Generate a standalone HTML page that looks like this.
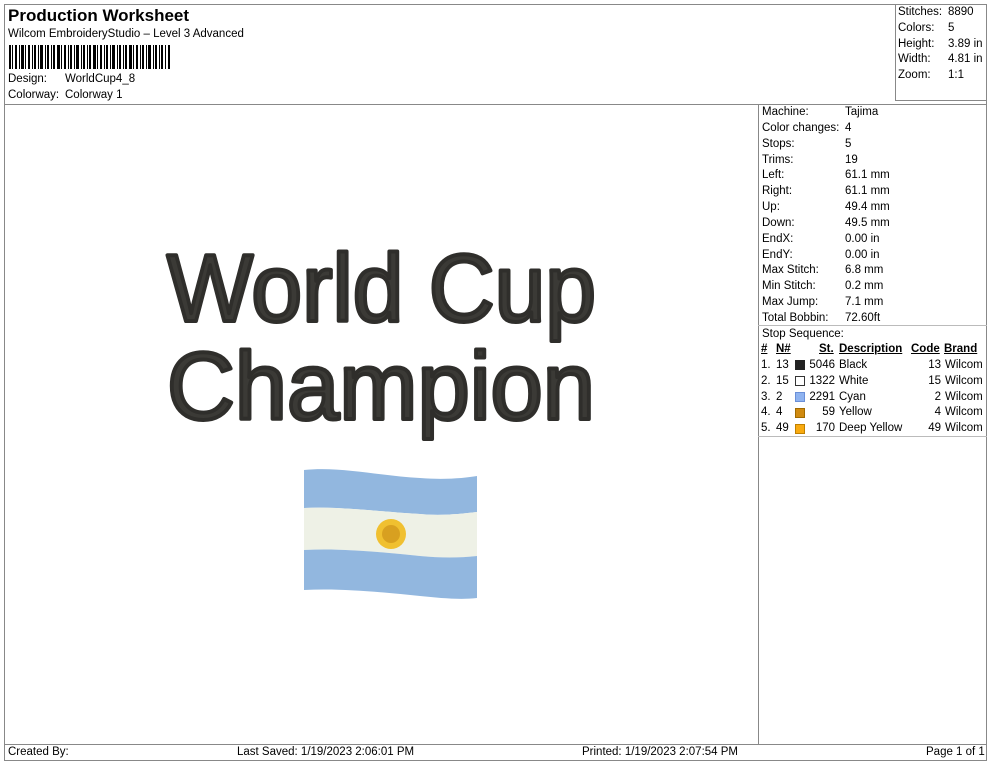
<!DOCTYPE html>
<html><head><meta charset="utf-8"><style>
*{margin:0;padding:0;box-sizing:border-box}
body{width:990px;height:762px;background:#fff;font-family:"Liberation Sans",Arial,sans-serif;color:#000;position:relative;overflow:hidden;font-size:11.5px}
.a{position:absolute;white-space:nowrap}
.b{position:absolute;border:1px solid #888}
</style></head><body>
<div class="b" style="left:4px;top:4px;width:983px;height:757px"></div>
<div class="b" style="left:4px;top:104px;width:983px;height:1px;border-width:1px 0 0 0"></div>
<div class="b" style="left:895px;top:4px;width:92px;height:97px"></div>
<div class="b" style="left:758px;top:104px;width:1px;height:640px;border-width:0 0 0 1px"></div>
<div class="b" style="left:4px;top:744px;width:983px;height:1px;border-width:1px 0 0 0"></div>
<div class="b" style="left:758px;top:325px;width:229px;height:1px;border-width:1px 0 0 0;border-color:#bbb"></div>
<div class="b" style="left:758px;top:436px;width:229px;height:1px;border-width:1px 0 0 0;border-color:#bbb"></div>

<div class="a" style="left:8px;top:6px;font-size:17px;font-weight:bold">Production Worksheet</div>
<div class="a" style="left:8px;top:28px">Wilcom EmbroideryStudio – Level 3 Advanced</div>
<svg class="a" style="left:9px;top:45px" width="162" height="24">
<g fill="#000">
<rect x="0" width="2" height="24"/><rect x="3" width="1" height="24"/><rect x="6" width="2" height="24"/><rect x="10" width="1" height="24"/><rect x="12" width="3" height="24"/><rect x="16" width="1" height="24"/><rect x="19" width="2" height="24"/><rect x="23" width="1" height="24"/><rect x="25" width="2" height="24"/><rect x="29" width="1" height="24"/><rect x="31" width="3" height="24"/><rect x="36" width="1" height="24"/><rect x="38" width="2" height="24"/><rect x="42" width="1" height="24"/><rect x="44" width="2" height="24"/><rect x="48" width="3" height="24"/><rect x="52" width="1" height="24"/><rect x="55" width="2" height="24"/><rect x="59" width="1" height="24"/><rect x="61" width="2" height="24"/><rect x="65" width="1" height="24"/><rect x="67" width="3" height="24"/><rect x="72" width="1" height="24"/><rect x="74" width="2" height="24"/><rect x="78" width="1" height="24"/><rect x="80" width="2" height="24"/><rect x="84" width="3" height="24"/><rect x="88" width="1" height="24"/><rect x="91" width="2" height="24"/><rect x="95" width="1" height="24"/><rect x="97" width="2" height="24"/><rect x="101" width="1" height="24"/><rect x="103" width="3" height="24"/><rect x="108" width="1" height="24"/><rect x="110" width="2" height="24"/><rect x="114" width="1" height="24"/><rect x="116" width="2" height="24"/><rect x="120" width="3" height="24"/><rect x="124" width="1" height="24"/><rect x="127" width="2" height="24"/><rect x="131" width="1" height="24"/><rect x="133" width="2" height="24"/><rect x="137" width="1" height="24"/><rect x="139" width="3" height="24"/><rect x="144" width="1" height="24"/><rect x="146" width="2" height="24"/><rect x="150" width="1" height="24"/><rect x="152" width="2" height="24"/><rect x="156" width="1" height="24"/><rect x="159" width="2" height="24"/>
</g></svg>
<div class="a" style="left:8px;top:73px">Design:</div><div class="a" style="left:65px;top:73px">WorldCup4_8</div>
<div class="a" style="left:8px;top:89px">Colorway:</div><div class="a" style="left:65px;top:89px">Colorway 1</div>

<div class="a" style="left:898px;top:5px;line-height:15.8px">Stitches:<br>Colors:<br>Height:<br>Width:<br>Zoom:</div>
<div class="a" style="left:948px;top:5px;line-height:15.8px">8890<br>5<br>3.89 in<br>4.81 in<br>1:1</div>

<div class="a" style="left:762px;top:105px;line-height:15.85px">Machine:<br>Color changes:<br>Stops:<br>Trims:<br>Left:<br>Right:<br>Up:<br>Down:<br>EndX:<br>EndY:<br>Max Stitch:<br>Min Stitch:<br>Max Jump:<br>Total Bobbin:<br>Stop Sequence:</div>
<div class="a" style="left:845px;top:105px;line-height:15.85px">Tajima<br>4<br>5<br>19<br>61.1 mm<br>61.1 mm<br>49.4 mm<br>49.5 mm<br>0.00 in<br>0.00 in<br>6.8 mm<br>0.2 mm<br>7.1 mm<br>72.60ft</div>

<div style="position:absolute;left:761px;top:342px;line-height:15.8px">
<div class="a" style="left:0;font-weight:bold;text-decoration:underline">#</div>
<div class="a" style="left:15px;font-weight:bold;text-decoration:underline">N#</div>
<div class="a" style="left:58px;font-weight:bold;text-decoration:underline">St.</div>
<div class="a" style="left:78px;font-weight:bold;text-decoration:underline">Description</div>
<div class="a" style="left:150px;font-weight:bold;text-decoration:underline">Code</div>
<div class="a" style="left:183px;font-weight:bold;text-decoration:underline">Brand</div>
<div class="a" style="left:0;top:16px">1.<br>2.<br>3.<br>4.<br>5.</div>
<div class="a" style="left:15px;top:16px">13<br>15<br>2<br>4<br>49</div>
<div class="a" style="left:34px;top:18px;width:10px;height:10px;background:#222"></div>
<div class="a" style="left:34px;top:34px;width:10px;height:10px;border:1px solid #333;background:#fff"></div>
<div class="a" style="left:34px;top:50px;width:10px;height:10px;border:1px solid #6a8fd8;background:#8fb3f0"></div>
<div class="a" style="left:34px;top:66px;width:10px;height:10px;border:1px solid #a06a00;background:#d08a10"></div>
<div class="a" style="left:34px;top:82px;width:10px;height:10px;border:1px solid #c08000;background:#f8aa10"></div>
<div class="a" style="left:48px;top:16px;width:26px;text-align:right">5046<br>1322<br>2291<br>59<br>170</div>
<div class="a" style="left:78px;top:16px">Black<br>White<br>Cyan<br>Yellow<br>Deep Yellow</div>
<div class="a" style="left:150px;top:16px;width:30px;text-align:right">13<br>15<br>2<br>4<br>49</div>
<div class="a" style="left:184px;top:16px">Wilcom<br>Wilcom<br>Wilcom<br>Wilcom<br>Wilcom</div>
</div>

<svg class="a" style="left:0;top:0" width="758" height="740">
<g fill="#3b3a36" stroke="#2f2e2b" stroke-width="4" stroke-linejoin="round" font-family="Liberation Sans,Arial,sans-serif" font-size="96">
<text x="167" y="321" textLength="429" lengthAdjust="spacingAndGlyphs">World Cup</text>
<text x="167" y="419" textLength="428" lengthAdjust="spacingAndGlyphs">Champion</text>
</g>
<path d="M304 470 C340 466 380 476 420 478 C445 480 465 478 477 476 L477 512 C460 514 440 516 420 514 C380 512 340 506 304 508 Z" fill="#92b7df"/>
<path d="M304 508 C340 506 380 512 420 514 C440 516 460 514 477 512 L477 556 C460 558 440 558 420 556 C380 552 340 548 304 550 Z" fill="#eef1e6"/>
<path d="M304 550 C340 548 380 552 420 556 C440 558 460 558 477 556 L477 598 C460 600 440 598 420 596 C380 592 340 588 304 590 Z" fill="#92b7df"/>
<circle cx="391" cy="534" r="15" fill="#f0c030"/>
<circle cx="391" cy="534" r="9" fill="#d8a020"/>
</svg>

<div class="a" style="left:8px;top:746px">Created By:</div>
<div class="a" style="left:237px;top:746px">Last Saved: 1/19/2023 2:06:01 PM</div>
<div class="a" style="left:582px;top:746px">Printed: 1/19/2023 2:07:54 PM</div>
<div class="a" style="left:926px;top:746px">Page 1 of 1</div>
</body></html>
